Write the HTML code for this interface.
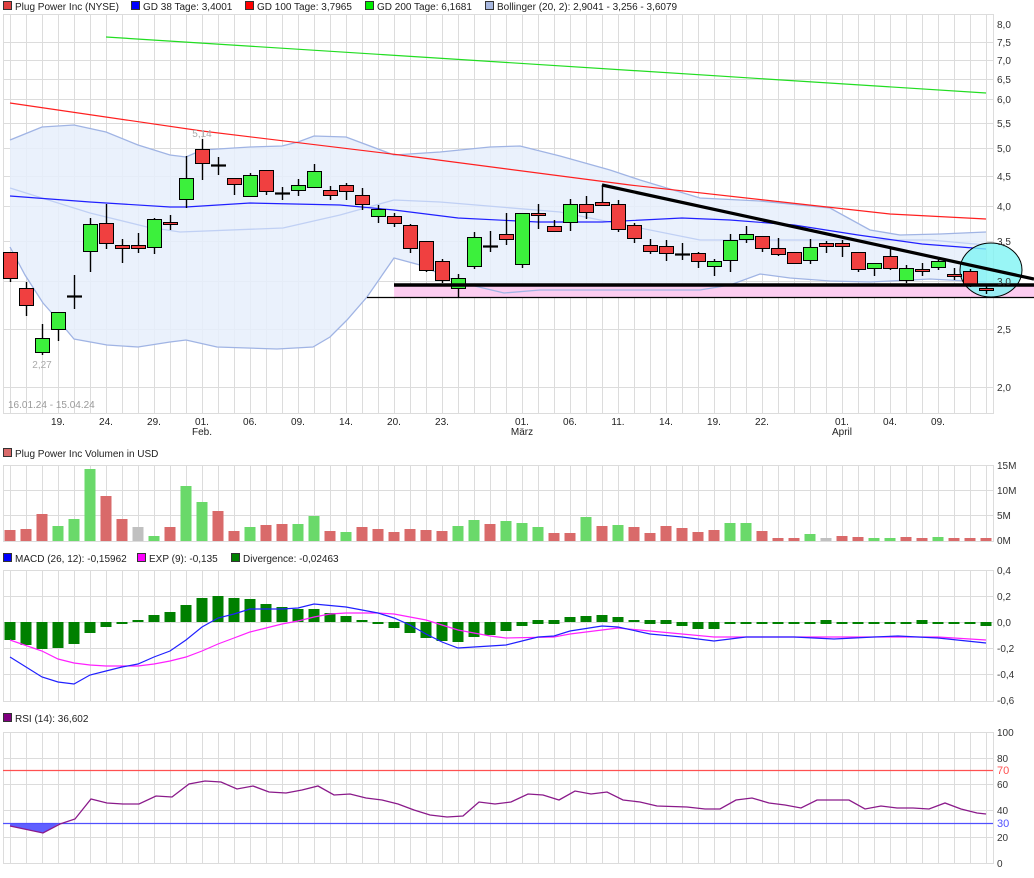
<!DOCTYPE html>
<html><head><meta charset="utf-8"><style>
html,body{margin:0;padding:0;background:#fff;}
body{width:1034px;height:873px;overflow:hidden;font-family:"Liberation Sans",sans-serif;}
svg text{font-family:"Liberation Sans",sans-serif;}
</style></head><body>
<svg id="s" width="1034" height="873" xmlns="http://www.w3.org/2000/svg"></svg>
<script>
var s=document.getElementById('s');var h='';
function L(x1,y1,x2,y2,c,w){h+='<line x1="'+x1+'" y1="'+y1+'" x2="'+x2+'" y2="'+y2+'" stroke="'+c+'" stroke-width="'+(w||1)+'"/>';}
function R(x,y,w,hh,f,st){h+='<rect x="'+x+'" y="'+y+'" width="'+w+'" height="'+hh+'" fill="'+f+'"'+(st?' stroke="'+st+'" stroke-width="1"':'')+'/>';}
function T(x,y,t,c,sz,a){h+='<text x="'+x+'" y="'+y+'" fill="'+(c||'#222')+'" font-size="'+(sz||11)+'"'+(a?' text-anchor="'+a+'"':'')+'>'+t+'</text>';}
function P(pts,c,w,f){h+='<polyline points="'+pts.map(function(p){return p.join(',')}).join(' ')+'" fill="'+(f||'none')+'" stroke="'+c+'" stroke-width="'+(w||1)+'"/>';}
function grid(y0,y1,hs){for(var x=10;x<=986;x+=16)L(x+.5,y0,x+.5,y1,'#dcdcdc');hs.forEach(function(y){L(3,y+.5,993,y+.5,'#dcdcdc');});
 h+='<rect x="3.5" y="'+(y0+.5)+'" width="990" height="'+(y1-y0)+'" fill="none" stroke="#dcdcdc"/>';}
function leg(x,y,c,t){R(x+.5,y-8.5,8,8,c,'#333');T(x+12,y,t,'#222',10);}
// legends
leg(3,10,'#e04040','Plug Power Inc (NYSE)');leg(131,10,'#0000ff','GD 38 Tage: 3,4001');leg(245,10,'#ff0000','GD 100 Tage: 3,7965');leg(365,10,'#00ee00','GD 200 Tage: 6,1681');leg(485,10,'#a8b8e0','Bollinger (20, 2): 2,9041 - 3,256 - 3,6079');
// price panel
grid(14,413,[42,60,79,99,123,148,176,206,241,281,329,387]);
var up=[[10,140],[42,127],[74,125],[106,132],[138,145],[170,155],[186,157],[202,150],[250,147],[282,146],[298,142],[314,136],[346,137],[394,155],[440,152],[490,147],[520,146],[560,156],[610,170],[640,180],[700,198],[760,201],[830,208],[870,230],[900,235],[940,234],[986,232]];
var lo=[[10,247],[25,275],[43,303],[58,320],[74,339],[107,345],[138,347],[170,342],[186,340],[217,347],[277,349],[313,347],[330,337],[347,320],[367,297],[394,258],[420,265],[458,282],[504,293],[540,290],[600,290],[700,290],[730,285],[760,274],[790,278],[830,281],[870,282],[930,279],[986,282]];
h+='<polygon points="'+up.concat(lo.slice().reverse()).map(function(p){return p.join(',')}).join(' ')+'" fill="#e6eefc" fill-opacity="0.85"/>';
R(394,285,640,12,'#fccdf0');
P(up,'#a0b4e4',1.3);P(lo,'#a0b4e4',1.3);
P([[10,188],[90,213],[147,227],[180,232],[283,228],[340,215],[394,200],[440,202],[560,212],[700,240],[930,240],[986,245]],'#c0d0f4',1.3);
P([[10,196],[90,202],[170,207],[186,207],[250,203],[340,205],[394,210],[458,218],[538,222],[602,222],[682,218],[730,220],[794,225],[858,235],[922,244],[986,249]],'#2020ff',1.2);
P([[10,103],[202,131],[400,155],[630,185],[890,214],[986,219]],'#ff2020',1.2);
P([[106,37],[986,93]],'#22dd22',1.2);
h+='<ellipse cx="991" cy="270" rx="31" ry="27" fill="#80f4f4" fill-opacity="0.8" stroke="#000" stroke-width="1"/>';
var C=[[0,252,278,252,282,'r'],[1,288,305,282,316,'r'],[2,338,352,324,355,'g'],[3,312,329,312,341,'g'],[4,296,296,275,309,'d'],[5,224,251,218,272,'g'],[6,223,243,204,249,'r'],[7,245,248,239,263,'r'],[8,245,248,233,253,'r'],[9,219,247,218,254,'g'],[10,222,224,215,230,'r'],[11,178,199,156,208,'g'],[12,149,163,139,180,'r'],[13,165,165,157,175,'d'],[14,178,184,178,195,'r'],[15,175,196,173,197,'g'],[16,170,191,170,195,'r'],[17,193,193,187,200,'d'],[18,185,190,179,196,'g'],[19,171,187,164,188,'g'],[20,190,195,186,200,'r'],[21,185,191,183,200,'r'],[22,195,204,188,210,'r'],[23,209,216,205,223,'g'],[24,216,223,213,227,'r'],[25,225,248,224,253,'r'],[26,241,270,241,272,'r'],[27,261,280,259,283,'r'],[28,278,288,274,297,'g'],[29,237,266,232,269,'g'],[30,246,246,231,252,'d'],[31,234,239,213,245,'r'],[32,213,264,213,268,'g'],[33,213,215,204,229,'r'],[34,226,231,220,232,'r'],[35,204,222,199,231,'g'],[36,204,212,196,219,'r'],[37,202,205,185,206,'r'],[38,204,229,200,232,'r'],[39,225,238,223,243,'r'],[40,245,251,239,254,'r'],[41,246,253,240,261,'r'],[42,254,254,243,260,'d'],[43,253,261,252,268,'r'],[44,261,266,259,276,'g'],[45,240,260,234,272,'g'],[46,234,239,226,243,'g'],[47,236,248,236,252,'r'],[48,248,254,238,256,'r'],[49,252,263,252,264,'r'],[50,247,260,239,264,'g'],[51,243,246,241,253,'r'],[52,243,246,240,257,'r'],[53,252,269,252,272,'r'],[54,263,268,263,276,'g'],[55,256,268,248,270,'r'],[56,268,280,265,283,'g'],[57,269,271,263,276,'r'],[58,261,267,257,270,'g'],[59,274,276,268,280,'r'],[60,271,284,269,287,'r'],[61,288,290,286,294,'r']];
C.forEach(function(c){var x=10+16*c[0];L(x+.5,c[3],x+.5,c[4],'#000',1.4);
 if(c[5]=='d'){L(x-7,c[1]+.5,x+8,c[1]+.5,'#000',2.2);}else{R(x-6.5,c[1]+.5,14,Math.max(c[2]-c[1],2),c[5]=='r'?'#f04040':'#3cf03c','#000');}});
L(394,285,1034,285,'#000',3.5);L(367,297.5,1034,297.5,'#000',1.2);
L(602,185,1034,279,'#000',3.2);
T(202,137,'5,14','#aaa',10,'middle');T(42,368,'2,27','#aaa',10,'middle');
T(8,408,'16.01.24 - 15.04.24','#999',10);
[['8,0',24],['7,5',42],['7,0',60],['6,5',79],['6,0',99],['5,5',123],['5,0',148],['4,5',176],['4,0',206],['3,5',241],['3,0',281],['2,5',329],['2,0',387]].forEach(function(a){T(997,a[1]+4,a[0],'#333',10);});
[['19.',58],['24.',106],['29.',154],['01.',202],['06.',250],['09.',298],['14.',346],['20.',394],['23.',442],['01.',522],['06.',570],['11.',618],['14.',666],['19.',714],['22.',762],['01.',842],['04.',890],['09.',938]].forEach(function(a){T(a[1],425,a[0],'#222',10,'middle');});
T(202,435,'Feb.','#222',10,'middle');T(522,435,'März','#222',10,'middle');T(842,435,'April','#222',10,'middle');
// volume
leg(3,457,'#d96a6a','Plug Power Inc Volumen in USD');
grid(465,541,[490,515]);
var V=[530,529,514,526,519,469,496,519,527,536,527,486,502,511,531,527,525,524,524,516,531,532,527,529,532,529,530,531,526,520,524,521,523,527,533,533,517,526,525,527,533,526,528,532,530,523,523,531,538,538,534,538,536,537,538,538,537,538,537,538,538,538];
var VC='rrrgggrrxgrggrrgrrggrgrrrrrrggrgggrrgrgrrrrrrggrrrgxrrggrrgrrr';
V.forEach(function(v,i){var x=10+16*i;R(x-5.5,v,11,541-v,VC[i]=='r'?'#d96a6a':VC[i]=='g'?'#6ad96a':'#c0c0c0');});
[['15M',465],['10M',490],['5M',515],['0M',540]].forEach(function(a){T(997,a[1]+4,a[0],'#333',10);});
// MACD
leg(3,562,'#0000ff','MACD (26, 12): -0,15962');leg(137,562,'#ff00ff','EXP (9): -0,135');leg(231,562,'#008000','Divergence: -0,02463');
grid(570,701,[596,622,648,674]);
var M=[640,645,649,648,644,633,627,624,620,615,612,605,598,596,598,599,604,607,609,609,613,616,620,624,628,633,638,641,642,637,635,631,626,621,621,617,616,615,617,620,623,623,626,629,629,624,624,624,624,624,624,621,624,624,624,624,624,621,624,624,624,626];
M.forEach(function(v,i){var x=10+16*i;var a=Math.min(v,622),b=Math.max(v,622);if(b-a<2){a=620;b=624;}R(x-5.5,a,11,b-a,'#008000');});
P([[10,640],[42,651],[58,659],[74,663],[90,665],[106,666],[138,666],[154,664],[170,661],[186,657],[202,651],[218,644],[234,638],[250,632],[266,628],[282,624],[298,621],[314,617],[330,614],[346,613],[378,613],[394,614],[410,617],[426,620],[442,625],[458,630],[474,633],[490,636],[506,638],[554,637],[570,634],[602,630],[618,628],[650,631],[682,634],[714,637],[746,637],[842,637],[938,637],[986,640]],'#ff20ff',1.2);
P([[10,657],[42,677],[58,682],[74,684],[90,675],[106,671],[122,667],[138,664],[154,657],[170,651],[186,640],[202,627],[218,618],[234,614],[250,609],[282,609],[298,608],[314,604],[346,607],[378,613],[394,618],[410,625],[426,634],[442,642],[458,648],[474,647],[506,645],[522,641],[538,637],[554,636],[570,631],[602,626],[618,627],[650,634],[682,637],[714,641],[746,637],[778,637],[794,637],[834,639],[874,637],[898,636],[938,638],[986,643]],'#2020ff',1.2);
[['0,4',570],['0,2',596],['0,0',622],['-0,2',648],['-0,4',674],['-0,6',700]].forEach(function(a){T(997,a[1]+4,a[0],'#333',10);});
// RSI
leg(3,722,'#800080','RSI (14): 36,602');
grid(732,863,[758,784,810,837]);
var RS=[[10,826],[43,833],[60,824],[75,819],[91,799],[107,803],[123,804],[139,804],[156,796],[172,797],[189,784],[205,781],[221,782],[237,789],[253,786],[269,792],[286,793],[302,790],[318,786],[334,795],[350,794],[366,798],[382,800],[398,804],[414,810],[430,815],[447,817],[463,816],[479,802],[495,804],[511,802],[528,794],[543,795],[559,800],[575,791],[591,794],[607,792],[623,800],[640,802],[657,806],[687,807],[705,809],[720,809],[736,800],[752,798],[769,803],[785,805],[801,808],[817,800],[849,800],[865,809],[881,806],[897,808],[913,808],[929,809],[945,803],[961,809],[977,813],[986,814]];
h+='<polygon points="10,823 10,826 43,833 60,823" fill="#6060ff"/>';
L(3,770.5,993,770.5,'#ff5050',1.2);L(3,823.5,993,823.5,'#5050ff',1.2);
P(RS,'#8a1a8a',1.3);
[['100',732],['80',758],['60',784],['40',810],['20',837],['0',863]].forEach(function(a){T(997,a[1]+4,a[0],'#333',10);});
T(997,774,'70','#ff5050',11);T(997,827,'30','#5050ff',11);
s.innerHTML=h;
</script>
</body></html>
